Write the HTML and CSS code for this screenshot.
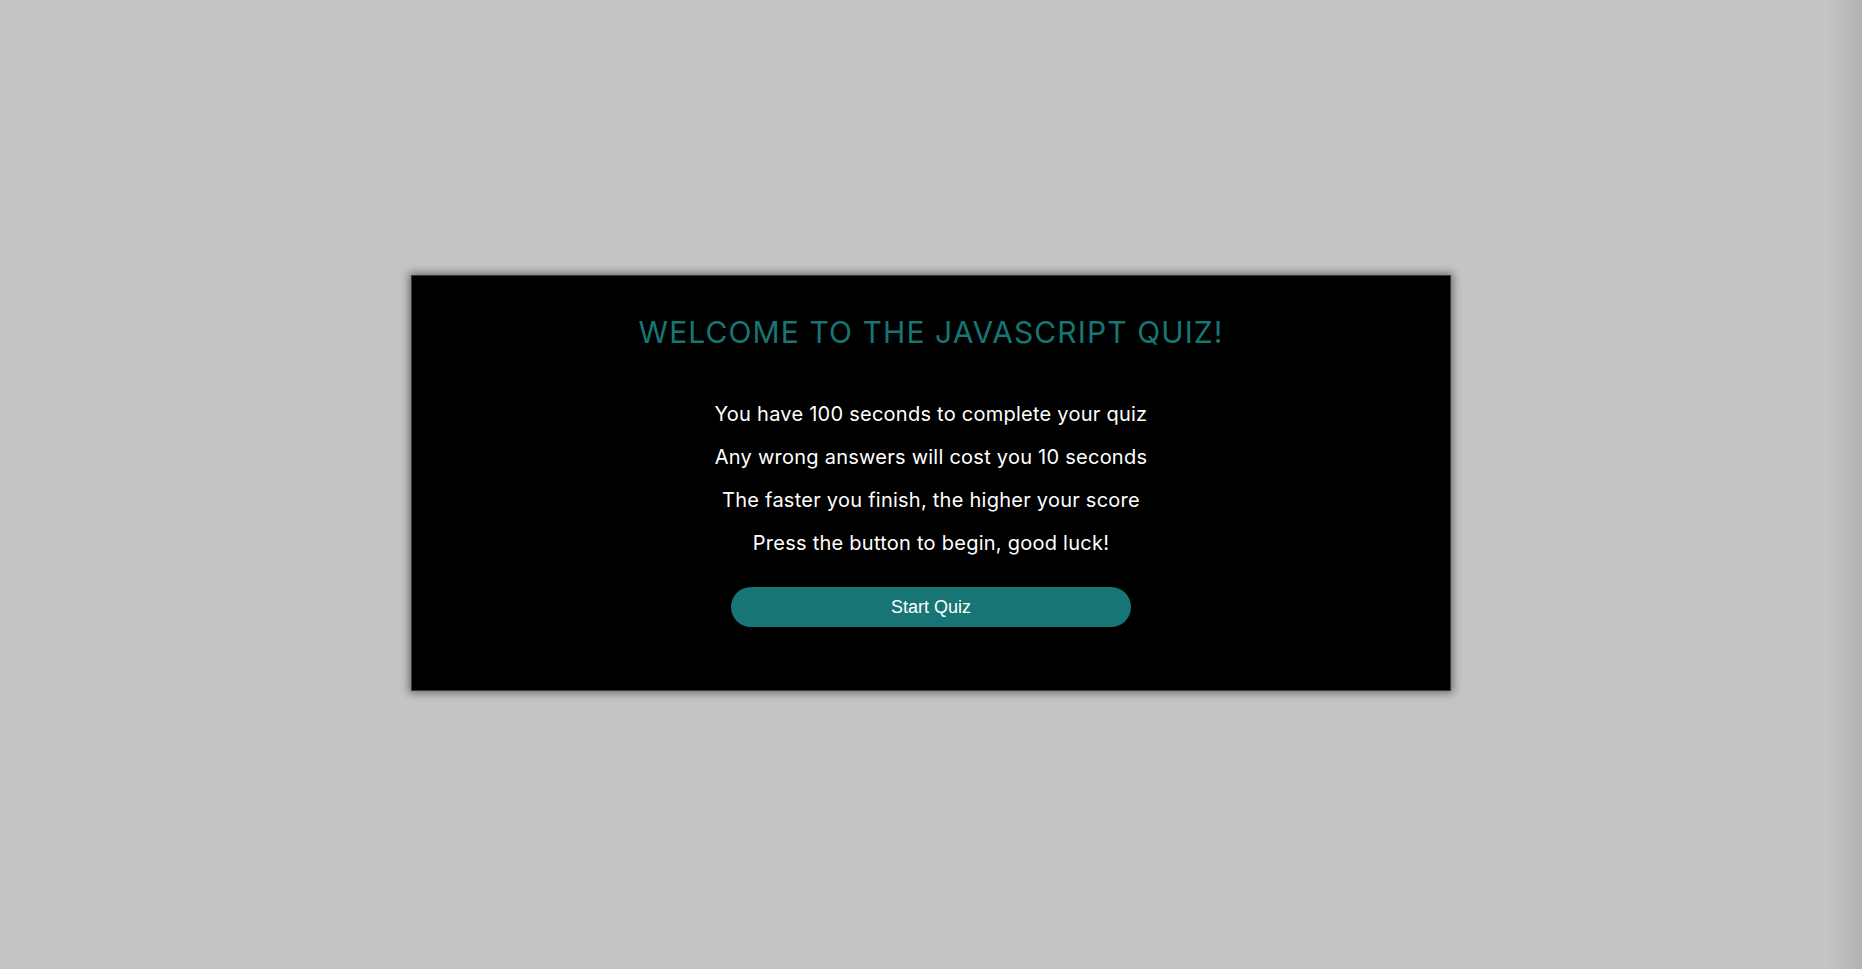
FILE: index.html
```html
<!DOCTYPE html>
<html lang="en">
<head>
<meta charset="utf-8">
<title>JavaScript Quiz</title>
<link rel="stylesheet" href="styles.css">
</head>
<body>
<main class="page">
  <section class="card">
    <h1 class="title">WELCOME TO THE JAVASCRIPT QUIZ!</h1>
    <div class="rules">
      <p>You have 100 seconds to complete your quiz</p>
      <p>Any wrong answers will cost you 10 seconds</p>
      <p>The faster you finish, the higher your score</p>
      <p>Press the button to begin, good luck!</p>
    </div>
    <button class="start">Start Quiz</button>
  </section>
</main>
</body>
</html>
```
FILE: styles.css
```css
html, body {
  margin: 0;
  height: 100%;
}
body {
  background: linear-gradient(to right, #c4c4c4 0, #c4c4c4 calc(100% - 36px), #b3b3b3 100%);
  font-family: "Inter", "Open Sans", sans-serif;
}
.page {
  height: 100%;
  display: flex;
  align-items: center;
  justify-content: center;
}
.card {
  width: 1040px;
  height: 416px;
  box-sizing: border-box;
  background: #000;
  border: 1px solid #3a3a3a;
  box-shadow: 0 0 8px 2px rgba(0,0,0,0.45);
  display: flex;
  flex-direction: column;
  align-items: center;
  padding-top: 38px;
  margin-top: -3px;
}
.title {
  margin: 0;
  font-weight: 400;
  font-size: 30px;
  line-height: 36px;
  letter-spacing: 1.1px;
  color: #177575;
}
.rules {
  margin-top: 52px;
  display: flex;
  flex-direction: column;
  align-items: center;
  gap: 19px;
}
.rules p {
  margin: 0;
  color: #fff;
  font-size: 20px;
  line-height: 24px;
  letter-spacing: 0.25px;
}
.start {
  margin-top: 32px;
  width: 400px;
  height: 40px;
  border: 0;
  border-radius: 20px;
  background: #177575;
  color: #fff;
  font-family: "Liberation Sans", Arial, sans-serif;
  font-size: 18px;
}
```
